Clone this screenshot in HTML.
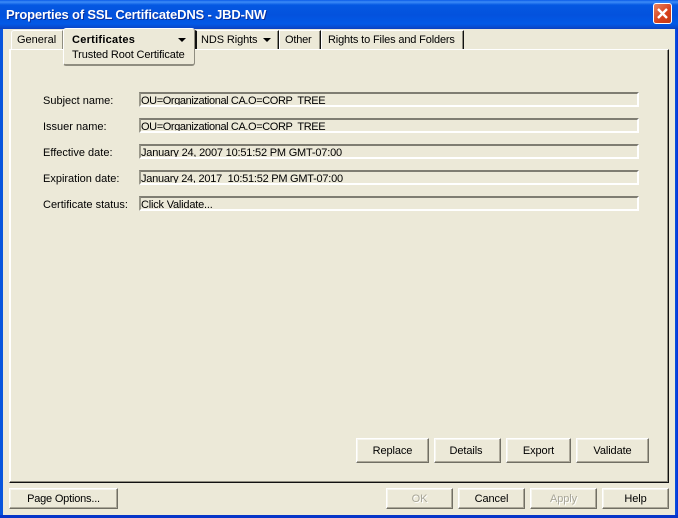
<!DOCTYPE html>
<html><head><meta charset="utf-8"><style>
html,body{margin:0;padding:0}
body{width:678px;height:518px;overflow:hidden;position:relative;background:#ECE9D8;font:11px/14px "Liberation Sans",sans-serif;color:#000}
div{position:absolute;box-sizing:border-box;white-space:pre}
.t{height:14px}
.f{left:139px;width:500px;height:15px;border-top:2px solid #7f7d72;border-left:2px solid #9a988a;border-bottom:2px solid #fff;border-right:2px solid #fff;line-height:14px;overflow:hidden}
.b{background:#ECE9D8;border-top:1px solid #fff;border-left:1px solid #fff;border-right:1px solid #716F64;border-bottom:1px solid #716F64;text-align:center;box-shadow:inset -1px -1px 0 #ACA899,inset 1px 1px 0 #f6f5ee;letter-spacing:-.1px}
.tab{top:30px;height:19px;border-top:1px solid #fff;border-left:1px solid #fff;border-right:1px solid #111;box-shadow:inset -1px 0 0 #8f8d80;background:#ECE9D8;line-height:18px}
.arr{width:0;height:0;border-left:4px solid transparent;border-right:4px solid transparent;border-top:4px solid #000}
.dis{color:#a8a698;text-shadow:1px 1px 0 #fff}
</style></head><body>
<div style="left:0;top:0;width:678px;height:29px;background:linear-gradient(180deg,#0A5BE8 0,#3C8CF7 2px,#0458E2 5px,#0352DD 15px,#0259E6 24px,#0A47C8 28px,#0A3FBE 29px)"></div>
<div style="left:0;top:29px;width:3px;height:489px;background:#0855DD"></div>
<div style="left:675px;top:29px;width:3px;height:489px;background:linear-gradient(90deg,#0855DD,#0831D9)"></div>
<div style="left:0;top:515px;width:678px;height:3px;background:#0735C8"></div>
<div style="left:6px;top:6px;height:17px;font:bold 13px/17px 'Liberation Sans',sans-serif;color:#fff;letter-spacing:-.17px;text-shadow:1px 1px 0 #0A2F9C">Properties of SSL CertificateDNS - JBD-NW</div>
<div style="left:653px;top:3px;width:19px;height:21px;border-radius:3px;border:1px solid #fff;background:linear-gradient(135deg,#E8825E,#D6401C 60%,#C33A14)">
<svg width="17" height="19" style="position:absolute;left:0;top:0"><path d="M4 5L13 14M13 5L4 14" stroke="#fff" stroke-width="2.4" fill="none"/></svg></div>
<div style="left:9px;top:49px;width:660px;height:434px;border-top:1px solid #fff;border-left:1px solid #fff;border-right:1px solid #111;border-bottom:1px solid #111;box-shadow:inset -1px -1px 0 #8f8d80,inset 1px 0 0 #fff"></div>
<div class="tab" style="left:11px;width:52px;padding-left:5px;border-top-left-radius:3px;border-right-color:#8f8d80;box-shadow:none">General</div>
<div class="tab" style="left:195px;width:84px;padding-left:4px;border-left:2px solid #111;letter-spacing:-.1px;box-shadow:inset -1px 0 0 #8f8d80">NDS Rights</div>
<div class="arr" style="left:263px;top:38px"></div>
<div class="tab" style="left:279px;width:42px;padding-left:5px;letter-spacing:-.2px">Other</div>
<div class="tab" style="left:321px;width:143px;padding-left:6px;letter-spacing:-.15px">Rights to Files and Folders</div>
<div style="left:63px;top:28px;width:132px;height:38px;background:#ECE9D8;border-top:1px solid #fff;border-left:1px solid #fff;border-right:1px solid #8f8d80;border-bottom:2px solid #8f8d80;border-radius:3px"></div>
<div class="t" style="left:72px;top:33px;font-weight:bold;letter-spacing:.27px">Certificates</div>
<div class="arr" style="left:178px;top:38px"></div>
<div class="t" style="left:72px;top:48px;letter-spacing:-.13px">Trusted Root Certificate</div>
<div class="t" style="left:43px;top:94px">Subject name:</div>
<div class="f" style="top:92px;letter-spacing:-.39px">OU=Organizational CA.O=CORP  TREE</div>
<div class="t" style="left:43px;top:120px">Issuer name:</div>
<div class="f" style="top:118px;letter-spacing:-.39px">OU=Organizational CA.O=CORP  TREE</div>
<div class="t" style="left:43px;top:146px">Effective date:</div>
<div class="f" style="top:144px;letter-spacing:-.2px">January 24, 2007 10:51:52 PM GMT-07:00</div>
<div class="t" style="left:43px;top:172px">Expiration date:</div>
<div class="f" style="top:170px;letter-spacing:-.25px">January 24, 2017  10:51:52 PM GMT-07:00</div>
<div class="t" style="left:43px;top:198px">Certificate status:</div>
<div class="f" style="top:196px;letter-spacing:-.2px">Click Validate...</div>
<div class="b" style="left:356px;top:438px;width:73px;height:25px;line-height:25px">Replace</div>
<div class="b" style="left:434px;top:438px;width:67px;height:25px;line-height:25px;padding-right:3px">Details</div>
<div class="b" style="left:506px;top:438px;width:65px;height:25px;line-height:25px">Export</div>
<div class="b" style="left:576px;top:438px;width:73px;height:25px;line-height:25px">Validate</div>
<div class="b" style="left:9px;top:488px;width:109px;height:21px;line-height:21px;letter-spacing:-.2px">Page Options...</div>
<div class="b dis" style="left:386px;top:488px;width:67px;height:21px;line-height:21px">OK</div>
<div class="b" style="left:458px;top:488px;width:67px;height:21px;line-height:21px">Cancel</div>
<div class="b dis" style="left:530px;top:488px;width:67px;height:21px;line-height:21px">Apply</div>
<div class="b" style="left:602px;top:488px;width:67px;height:21px;line-height:21px">Help</div>
</body></html>
